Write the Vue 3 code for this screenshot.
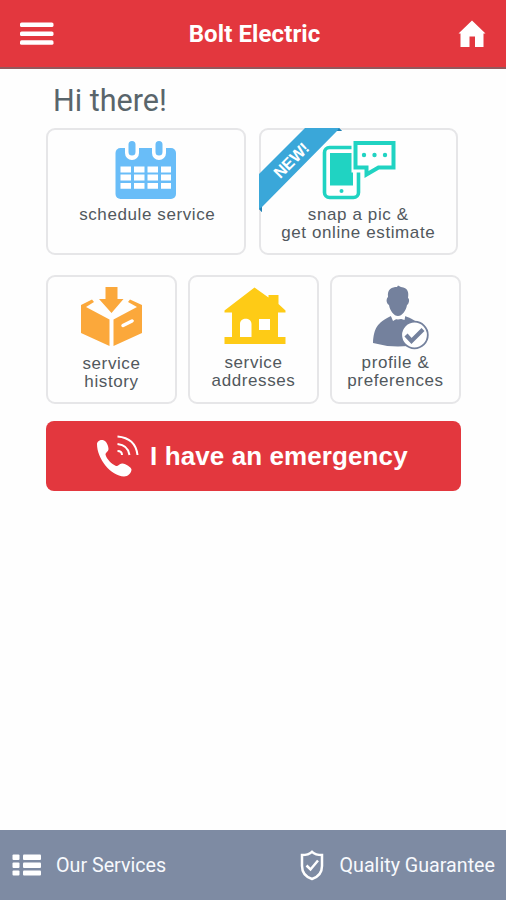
<script setup>
import { ref } from 'vue'

const company = ref('Bolt Electric')
</script>
<template>
  <div class="home">
    <header class="header">
      <button class="header-btn" aria-label="Menu">
        <svg width="34" height="24" viewBox="0 0 34 24" fill="#fff">
          <rect x="0" y=".5" width="33.500" height="4.6" rx="1.6" />
          <rect x="0" y="9.4" width="33.500" height="4.6" rx="1.6" />
          <rect x="0" y="18.2" width="33.500" height="4.6" rx="1.6" />
        </svg>
      </button>
      <h1 class="title">{{ company }}</h1>
      <button class="header-btn" aria-label="Home">
        <svg width="28" height="28" viewBox="0 0 28 28" fill="#fff">
          <path d="M14 .5L27.5 13.5H25.500V27H17V16.500H11.500V27H2.500V13.500H.500Z" />
        </svg>
      </button>
    </header>

    <main class="content">
      <h2 class="greeting">Hi there!</h2>

      <div class="row row-top">
        <button class="card schedule">
          <svg class="icon" width="62" height="60" viewBox="0 0 62 60">
            <rect x=".5" y="8" width="60.500" height="51" rx="5" fill="#69bdf8" />
            <path d="M17 5V13M44 5V13" stroke="#fff" stroke-width="14" stroke-linecap="round" />
            <path d="M17 4.500V12M44 4.500V12" stroke="#69bdf8" stroke-width="7" stroke-linecap="round" />
            <path d="M5.500 29.500H56M5.500 37.500H56M5.500 45.800H56" stroke="#fff" stroke-width="5.800" stroke-dasharray="10.500 3" />
          </svg>
          <span>schedule service</span>
        </button>
        <button class="card">
          <svg class="icon snap" width="74" height="60" viewBox="0 0 74 60">
            <rect x="2.500" y="7.500" width="34" height="50" rx="5" fill="#fff" stroke="#20d3c2" stroke-width="3.600" />
            <rect x="8" y="13" width="23" height="32.500" fill="#20d3c2" />
            <circle cx="19.500" cy="51" r="2" fill="#20d3c2" />
            <path d="M29.500 0H74V34H55L42 41V32.500H29.500Z" fill="#fefefe" />
            <path d="M33.500 3H71.500V27.500H56.500L44.500 34.500V27.500H33.500Z" fill="#fff" stroke="#20d3c2" stroke-width="4" />
            <g fill="#20d3c2">
              <circle cx="42" cy="15" r="2.200" />
              <circle cx="52.500" cy="15" r="2.200" />
              <circle cx="63" cy="15" r="2.200" />
            </g>
          </svg>
          <span>snap a pic &amp;<br>get online estimate</span>
          <svg class="ribbon" width="84" height="85" viewBox="0 0 84 85">
            <path d="M46 0H80L83 3H78L3 79V84L0 81V46Z" fill="#3aa7d9" />
            <path d="M78 3L80 0L83 3ZM3 79L0 81L3 84Z" fill="#2380b2" />
            <text class="ribbon-text" x="32" y="38" text-anchor="middle" transform="rotate(-45 32 32)">NEW!</text>
          </svg>
        </button>
      </div>

      <div class="row row-bottom">
        <button class="card small">
          <svg class="icon box" width="64" height="60" viewBox="0 0 64 60" fill="#fba83b">
            <path d="M25.500 0H37.500V12H43.500L31.500 26L19 12H25.500Z" />
            <path d="M1 18L12 12.500L14 15L6 20L29.500 32.500V59L1 46Z" />
            <path d="M62 18L50 12.500L48 15L57 20L33.500 32.500V59L62 46Z" />
            <path d="M43 38.500L52 34" stroke="#fff" stroke-width="3.500" stroke-linecap="round" />
          </svg>
          <span>service<br>history</span>
        </button>
        <button class="card small">
          <svg class="icon house" width="62" height="58" viewBox="0 0 62 58">
            <path d="M30.500 .500L44.500 10.500V8H54.500V17L61.500 23.500V25.500H54V50H61.500V57H.500V50H8V25.500H.500V23.500Z" fill="#fecb16" />
            <path d="M16 50V37C16 30 27.500 30 27.500 37V50ZM35 32H46V43H35Z" fill="#fff" />
          </svg>
          <span>service<br>addresses</span>
        </button>
        <button class="card small">
          <svg class="icon profile" width="56" height="66" viewBox="0 0 56 66">
            <path d="M15 12C14 4 19 2 24 2L25 .500L28 2C35 3 36 7 35 13C37 14 36 19 34 20C33 26 29 31 25 31C21 31 17 26 16 20C13 18 13 14 15 12Z" fill="#74819d" />
            <path d="M0 58C1 43 4 38 18 31Q25 38 32 31C45 36 49 40 50 58Q25 65 0 58Z" fill="#74819d" />
            <path d="M17.500 30L25 32L32.500 30L31.500 35L25 33L20 36Z" fill="#fff" />
            <circle cx="41.500" cy="50" r="13.300" fill="#fff" stroke="#74819d" stroke-width="1.800" />
            <path d="M33 50L38.500 56L50 44.500" fill="none" stroke="#74819d" stroke-width="4.200" />
          </svg>
          <span>profile &amp;<br>preferences</span>
        </button>
      </div>

      <button class="emergency">
        <svg width="43" height="43" viewBox="0 0 43 43">
          <path d="M1 9C1 6 5 4 8 5.500C10.500 6.500 12.500 11 12.500 14C12.500 16.500 9.500 17.500 9.500 19.500C10.500 24 15.500 29 20 31C22.500 31.500 23.500 28 26.500 28.500C30 29 35 32 35.500 34.500C35.500 38 32 41.500 28 41.500C15 41 1 24 1 9Z" fill="#fff" />
          <g fill="none" stroke="#fff" stroke-width="2">
            <path d="M21.500 1.500Q39.500 3 41.500 20" />
            <path d="M21.500 9Q32 10 33.500 20" />
            <path d="M21.500 16Q26 16 26 20" />
          </g>
        </svg>
        <span>I have an emergency</span>
      </button>
    </main>

    <footer class="footer">
      <a class="link">
        <svg width="30" height="22" viewBox="0 0 30 22" fill="#fff">
          <rect x=".500" y=".500" width="7" height="5.500" rx="1" />
          <rect x="11" y=".500" width="18" height="5.500" rx="1" />
          <rect x=".500" y="8.500" width="7" height="5.500" rx="1" />
          <rect x="11" y="8.500" width="18" height="5.500" rx="1" />
          <rect x=".500" y="16.500" width="7" height="5" rx="1" />
          <rect x="11" y="16.500" width="18" height="5" rx="1" />
        </svg>
        <span>Our Services</span>
      </a>
      <a class="link quality">
        <svg width="24" height="31" viewBox="0 0 24 31" fill="none" stroke="#fff">
          <path d="M12 1.800Q15.500 5 22 5V16C22 23 18 27 12 29C6 27 2 23 2 16V5Q8.500 5 12 1.800Z" stroke-width="2.500" />
          <path d="M6.500 15.500L10.500 19.500L18 10.500" stroke-width="2.500" />
        </svg>
        <span>Quality Guarantee</span>
      </a>
    </footer>
  </div>
</template>

<style>
body {
  margin: 0;
  background: #fefefe;
}
</style>

<style scoped>
.home {
  display: flex;
  flex-direction: column;
  height: 900px;
  background: #fefefe;
  font-family: Roboto, sans-serif;
}

button {
  padding: 0;
  border: none;
  background: none;
  font: inherit;
}

.header {
  display: flex;
  align-items: center;
  justify-content: space-between;
  box-sizing: border-box;
  height: 69px;
  padding: 0 20px;
  border-bottom: 2px solid #93585c;
  background: #e3373e;
}

.header-btn {
  display: flex;
}

.title {
  margin: 0 3px 0 0;
  color: #fff;
  font-size: 24px;
  font-weight: 700;
  letter-spacing: .1px;
}

.content {
  flex: 1;
  padding: 0 45px 0 46px;
}

.greeting {
  margin: 12px 0 0 7px;
  height: 47px;
  line-height: 39px;
  color: #59656b;
  font-size: 30.500px;
  font-weight: 400;
}

.row {
  display: flex;
}

.row-top {
  gap: 13px;
  padding-right: 3px;
}

.row-bottom {
  gap: 11px;
  margin: 20px 0 17px;
}

.card {
  position: relative;
  display: flex;
  flex: 1;
  flex-direction: column;
  align-items: center;
  box-sizing: border-box;
  height: 127px;
  padding-top: 10px;
  border: 2px solid #e6e6e8;
  border-radius: 9px;
  background: #fefefe;
  color: #51585d;
  font-family: "Liberation Sans", Arial, sans-serif;
  font-size: 17px;
  line-height: 18px;
  letter-spacing: .6px;
  text-align: center;
  white-space: nowrap;
}

.card .icon {
  margin: 0 0 6px;
}

.schedule span {
  padding-left: 3px;
}

.card .snap {
  margin-left: 2px;
}

.card.small {
  height: 129px;
}

.card .box {
  margin-bottom: 8px;
}

.card .house {
  margin-left: 2px;
  margin-bottom: 9px;
}

.card .profile {
  margin-top: -2px;
  margin-left: 10px;
  margin-bottom: 3px;
}

.ribbon {
  position: absolute;
  top: -2px;
  left: -2px;
}

.ribbon-text {
  fill: #fff;
  font-size: 16px;
  font-weight: 700;
  letter-spacing: 0;
}

.emergency {
  display: flex;
  align-items: center;
  box-sizing: border-box;
  width: 100%;
  height: 70px;
  padding-left: 50px;
  gap: 11px;
  border-radius: 8px;
  background: #e3373e;
  color: #fff;
  font-family: "Liberation Sans", Arial, sans-serif;
  font-size: 26px;
  font-weight: 700;
  letter-spacing: .1px;
  white-space: nowrap;
}

.footer {
  display: flex;
  align-items: center;
  justify-content: space-between;
  height: 70px;
  padding: 0 11px 0 12px;
  background: #7e8ba3;
  color: #f7f9fd;
  font-size: 19.700px;
}

.link {
  display: flex;
  align-items: center;
  gap: 14px;
}

.quality {
  gap: 16px;
}
</style>
